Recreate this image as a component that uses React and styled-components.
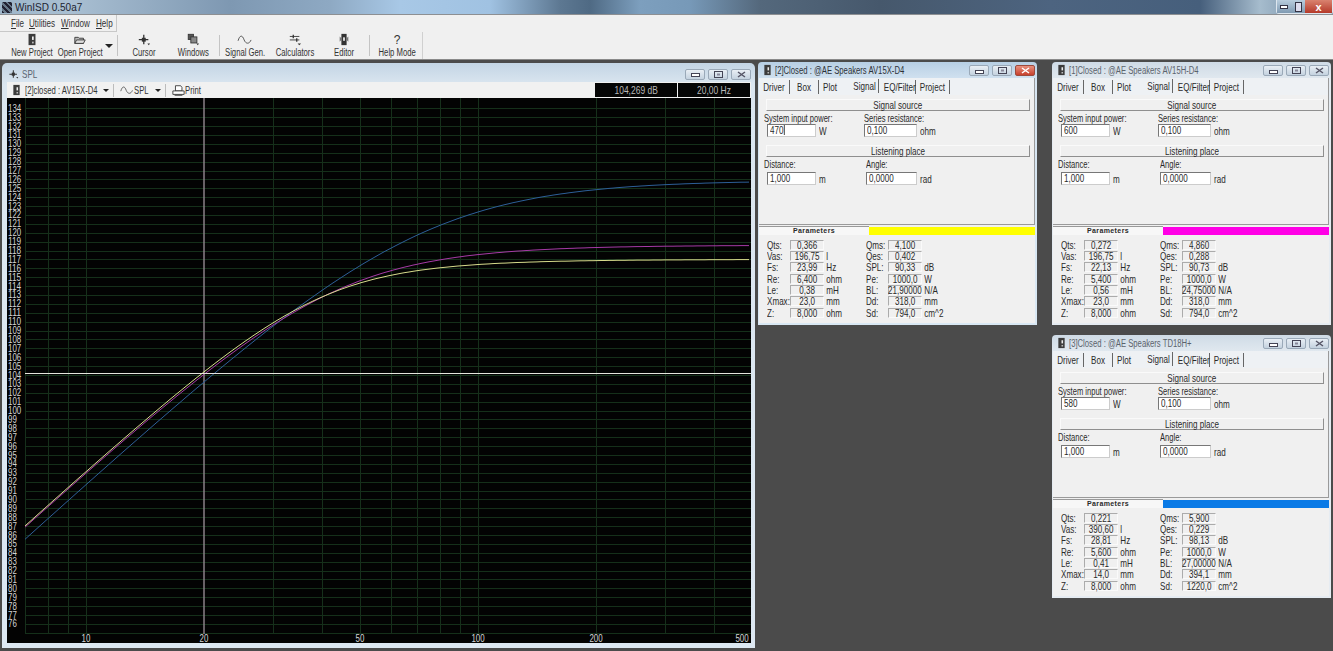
import React from "react";
import styled, { createGlobalStyle, css } from "styled-components";

const GlobalStyle = createGlobalStyle`
  html, body {
    margin: 0;
    padding: 0;
    height: 100%;
    overflow: hidden;
    background: #4b4b4b;
  }
  body {
    font-family: "Liberation Sans", Arial, sans-serif;
    font-size: 10px;
    color: #2a2a2a;
  }
`;

// the app's font is much narrower than anything installed
const squeeze = css`
  transform: scaleX(0.77);
  transform-origin: left center;
  white-space: nowrap;
`;

const Sq = styled.span`
  display: inline-block;
  white-space: nowrap;
  transform: scaleX(0.77);
  transform-origin: ${(p) => (p.$left ? "left" : "center")} center;
`;

const toolGroups = [
  {
    pad: 5,
    tools: [
      { label: "New Project", icon: "door", width: 48 },
      { label: "Open Project", icon: "folder", width: 48 },
      { arrow: true },
    ],
  },
  {
    pad: 2,
    tools: [
      { label: "Cursor", icon: "cursor", width: 48 },
      { label: "Windows", icon: "windows", width: 50 },
    ],
  },
  {
    pad: 0,
    tools: [
      { label: "Signal Gen.", icon: "wave", width: 50 },
      { label: "Calculators", icon: "sliders", width: 50 },
      { label: "Editor", icon: "editor", width: 48 },
    ],
  },
  { pad: 2, tools: [{ label: "Help Mode", icon: "help", width: 50 }] },
];

const menus = [
  { key: "F", rest: "ile", width: 18 },
  { key: "U", rest: "tilities", width: 32 },
  { key: "W", rest: "indow", width: 35 },
  { key: "H", rest: "elp", width: 18 },
];

const tabs = [
  { label: "Driver", width: 31 },
  { label: "Box", width: 29 },
  { label: "Plot", width: 31, plain: true },
  { label: "Signal", width: 29, active: true },
  { label: "EQ/Filter", width: 37 },
  { label: "Project", width: 34 },
];

const speakers = [
  {
    id: 2,
    x: 758,
    y: 2,
    title: "[2]Closed : @AE Speakers AV15X-D4",
    power: "470",
    color: "#ffff00",
    focused: true,
    params: [
      ["Qts:", "0,366", "", "Qms:", "4,100", ""],
      ["Vas:", "196,75", "l", "Qes:", "0,402", ""],
      ["Fs:", "23,99", "Hz", "SPL:", "90,33", "dB"],
      ["Re:", "6,400", "ohm", "Pe:", "1000,0", "W"],
      ["Le:", "0,38", "mH", "BL:", "21,90000", "N/A"],
      ["Xmax:", "23,0", "mm", "Dd:", "318,0", "mm"],
      ["Z:", "8,000", "ohm", "Sd:", "794,0", "cm^2"],
    ],
  },
  {
    id: 1,
    x: 1052,
    y: 2,
    title: "[1]Closed : @AE Speakers AV15H-D4",
    power: "600",
    color: "#ff00e6",
    params: [
      ["Qts:", "0,272", "", "Qms:", "4,860", ""],
      ["Vas:", "196,75", "l", "Qes:", "0,288", ""],
      ["Fs:", "22,13", "Hz", "SPL:", "90,73", "dB"],
      ["Re:", "5,400", "ohm", "Pe:", "1000,0", "W"],
      ["Le:", "0,56", "mH", "BL:", "24,75000", "N/A"],
      ["Xmax:", "23,0", "mm", "Dd:", "318,0", "mm"],
      ["Z:", "8,000", "ohm", "Sd:", "794,0", "cm^2"],
    ],
  },
  {
    id: 3,
    x: 1052,
    y: 275,
    title: "[3]Closed : @AE Speakers TD18H+",
    power: "580",
    color: "#0a7ae6",
    params: [
      ["Qts:", "0,221", "", "Qms:", "5,900", ""],
      ["Vas:", "390,60", "l", "Qes:", "0,229", ""],
      ["Fs:", "28,81", "Hz", "SPL:", "98,13", "dB"],
      ["Re:", "5,600", "ohm", "Pe:", "1000,0", "W"],
      ["Le:", "0,41", "mH", "BL:", "27,00000", "N/A"],
      ["Xmax:", "14,0", "mm", "Dd:", "394,1", "mm"],
      ["Z:", "8,000", "ohm", "Sd:", "1220,0", "cm^2"],
    ],
  },
];

// chart scale, in page pixels
const freqX = (f) => 86 + 392 * Math.log10(f / 10);
const splY = (db) => 108.3 + (134 - db) * 8.89;
const lineY = (db) => Math.round(splY(db)) + 0.5;

const gridFreqs = [7, 8, 9, 10, 30, 40, 50, 60, 70, 80, 90, 100, 200, 300, 400];
const levels = Array.from({ length: 59 }, (_, i) => 134 - i);
const freqLabels = [
  { text: "10", x: 86 },
  { text: "20", x: 204 },
  { text: "50", x: 360 },
  { text: "100", x: 478 },
  { text: "200", x: 596 },
  { text: "500", x: 742 },
];

const curves = [
  { color: "#2d5f98", peak: 125.88, fc: 71, q: 0.5 },
  { color: "#a63aa6", peak: 118.6, fc: 43, q: 0.55 },
  { color: "#d8dc8c", peak: 117, fc: 39, q: 0.6 },
];

// closed box is a second order high-pass
function curvePath({ peak, fc, q }) {
  const pts = [];
  for (let px = 25; px <= 751; px += 4) {
    const x = (10 * Math.pow(10, (px - 86) / 392)) / fc;
    const gain = x ** 4 / (x ** 4 + (1 / (q * q) - 2) * x * x + 1);
    pts.push(`${px},${splY(peak + 10 * Math.log10(gain)).toFixed(1)}`);
  }
  return pts.join(" ");
}

function ToolIcon({ name }) {
  if (name === "door") {
    return (
      <svg width="14" height="15" viewBox="0 0 14 15">
        <rect x="3" y="1" width="8" height="13" fill="#3c3c3c" />
        <rect x="7" y="4" width="2" height="4" fill="#eee" />
        <rect x="7" y="10" width="2" height="2" fill="#bbb" />
      </svg>
    );
  }
  if (name === "folder") {
    return (
      <svg width="16" height="15" viewBox="0 0 16 15" fill="none" stroke="#333">
        <path d="M2 5h4l1 1h5v6H2z" fill="#bbb" />
        <path d="M4 8h10l-2 4H2z" fill="#ddd" />
      </svg>
    );
  }
  if (name === "cursor") {
    return (
      <svg width="16" height="15" viewBox="0 0 16 15" fill="#333">
        <path d="M7 2h1.5v11H7zM2 7h11v1.5H2z" />
        <path d="M5.5 5.5h4.5v4.5H5.5z" />
        <path d="M12 12h3l-1.5 2z" />
      </svg>
    );
  }
  if (name === "windows") {
    return (
      <svg width="16" height="15" viewBox="0 0 16 15" stroke="#333">
        <rect x="2.5" y="1.5" width="6" height="6" fill="#555" />
        <rect x="5.5" y="4.5" width="7" height="7" fill="#888" />
        <path d="M12 12h3l-1.5 2z" fill="#333" stroke="none" />
      </svg>
    );
  }
  if (name === "wave") {
    return (
      <svg width="18" height="15" viewBox="0 0 18 15" fill="none" stroke="#444">
        <path d="M1 9 C3 2 6 2 8 8 C10 13 14 13 16 8" />
      </svg>
    );
  }
  if (name === "sliders") {
    return (
      <svg width="16" height="15" viewBox="0 0 16 15" stroke="#333">
        <path d="M2 4h11M2 8h11" />
        <path d="M6 2v4M10 6v4" strokeWidth="1.5" />
        <path d="M11 12h4l-2 2z" fill="#333" stroke="none" />
      </svg>
    );
  }
  if (name === "editor") {
    return (
      <svg width="14" height="15" viewBox="0 0 14 15">
        <rect x="4" y="1" width="6" height="13" fill="#333" />
        <path d="M2 4l3 3-3 3zM12 4L9 7l3 3z" fill="#777" />
        <rect x="6" y="5" width="2" height="4" fill="#eee" />
      </svg>
    );
  }
  return <HelpGlyph>?</HelpGlyph>;
}

function WindowButtons({ focused }) {
  return (
    <ButtonGroup>
      <CaptionButton>
        <svg width="9" height="6" viewBox="0 0 9 6">
          <rect x="0.5" y="2.5" width="8" height="3" fill="#fff" stroke="#445" />
        </svg>
      </CaptionButton>
      <CaptionButton>
        <svg width="9" height="7" viewBox="0 0 9 7">
          <rect x="0.5" y="0.5" width="8" height="6" fill="none" stroke="#445" />
          <rect x="3" y="2.5" width="3" height="2" fill="#889" />
        </svg>
      </CaptionButton>
      <CaptionButton $close={focused}>
        <svg width="9" height="7" viewBox="0 0 9 7" fill="none" stroke={focused ? "#fff" : "#556"} strokeWidth="1.5">
          <path d="M1 1l7 5M8 1L1 6" />
        </svg>
      </CaptionButton>
    </ButtonGroup>
  );
}

function Field({ label, value, unit, width, shift, caret, inset, low }) {
  return (
    <FieldBox $shift={shift}>
      <FieldLabel>{label}</FieldLabel>
      <FieldRow $inset={inset} $low={low}>
        <TextBox $width={width}>
          <Sq $left>
            {value}
            {caret && <Caret />}
          </Sq>
        </TextBox>
        <Unit>{unit}</Unit>
      </FieldRow>
    </FieldBox>
  );
}

function SpeakerWindow({ speaker }) {
  return (
    <Frame $x={speaker.x} $y={speaker.y} $focused={speaker.focused}>
      <Caption>
        <ToolSmall>
          <ToolIcon name="door" />
        </ToolSmall>
        <CaptionText $focused={speaker.focused}>{speaker.title}</CaptionText>
        <WindowButtons focused={speaker.focused} />
      </Caption>
      <Client>
        <TabPane>
          <TabRow>
            {tabs.map((tab) => (
              <Tab key={tab.label} $width={tab.width} $active={tab.active} $plain={tab.plain}>
                <Sq>{tab.label}</Sq>
              </Tab>
            ))}
          </TabRow>
          <SectionBar><Sq>Signal source</Sq></SectionBar>
          <FieldGrid>
            <Field label="System input power:" value={speaker.power} unit="W" width={49} caret={speaker.focused} inset />
            <Field label="Series resistance:" value="0,100" unit="ohm" width={53} />
          </FieldGrid>
          <SectionBar><Sq>Listening place</Sq></SectionBar>
          <FieldGrid>
            <Field label="Distance:" value="1,000" unit="m" width={49} inset low />
            <Field label="Angle:" value="0,0000" unit="rad" width={51} shift low />
          </FieldGrid>
        </TabPane>
        <ParamHeader>
          <ParamTab>Parameters</ParamTab>
          <ColorBar $color={speaker.color} />
        </ParamHeader>
        <ParamGrid>
          {speaker.params.map((row) => (
            <React.Fragment key={row[0]}>
              <ParamLabel>{row[0]}</ParamLabel>
              <ParamValue><Sq>{row[1]}</Sq></ParamValue>
              <ParamUnit>{row[2]}</ParamUnit>
              <ParamLabel>{row[3]}</ParamLabel>
              <ParamValue><Sq>{row[4]}</Sq></ParamValue>
              <ParamUnit>{row[5]}</ParamUnit>
            </React.Fragment>
          ))}
        </ParamGrid>
      </Client>
    </Frame>
  );
}

function SplChart() {
  return (
    <ChartSvg viewBox="7 98 744 545" width="744" height="545">
      <rect x="7" y="98" width="744" height="545" fill="#030303" />
      {levels.map((db) => (
        <line key={db} x1="25" x2="751" y1={lineY(db)} y2={lineY(db)} stroke="#15301a" />
      ))}
      <line x1="25" x2="751" y1="633.5" y2="633.5" stroke="#15301a" />
      {gridFreqs.map((f) => (
        <line
          key={f}
          x1={Math.round(freqX(f)) + 0.5}
          x2={Math.round(freqX(f)) + 0.5}
          y1="98"
          y2="634"
          stroke="#162f1b"
        />
      ))}
      <line x1="204" x2="204" y1="98" y2="634" stroke="#8b8088" strokeWidth="1.5" />
      {curves.map((curve) => (
        <polyline key={curve.color} points={curvePath(curve)} fill="none" stroke={curve.color} strokeWidth="1" />
      ))}
      <line x1="25" x2="751" y1="373.5" y2="373.5" stroke="#e4e4dc" />
      {levels.map((db) => (
        <AxisText key={db} x="8" y={splY(db) + 3.5} textLength={String(db).length * 4.4} lengthAdjust="spacingAndGlyphs">
          {db}
        </AxisText>
      ))}
      {freqLabels.map((label) => (
        <AxisText
          key={label.text}
          x={label.x - label.text.length * 2.2}
          y="642"
          textLength={label.text.length * 4.4}
          lengthAdjust="spacingAndGlyphs"
        >
          {label.text}
        </AxisText>
      ))}
    </ChartSvg>
  );
}

function App() {
  return (
    <>
      <GlobalStyle />
      <Page>
        <TitleBar>
          <AppIcon />
          <AppTitle>WinISD 0.50a7</AppTitle>
          <AppButtons>
            <AppButton>
              <svg width="8" height="5" viewBox="0 0 8 5"><rect x="0.5" y="1.5" width="7" height="3" fill="#fff" stroke="#334" /></svg>
            </AppButton>
            <AppButton>
              <svg width="7" height="10" viewBox="0 0 7 10"><rect x="0.5" y="0.5" width="6" height="9" fill="#dde" stroke="#334" /></svg>
            </AppButton>
            <AppButton $close>x</AppButton>
          </AppButtons>
        </TitleBar>
        <MenuBar>
          <MenuBand>
            {menus.map((menu) => (
              <MenuItem key={menu.key} $width={menu.width}>
                <u>{menu.key}</u>
                {menu.rest}
              </MenuItem>
            ))}
          </MenuBand>
        </MenuBar>
        <ToolBar>
          <ToolBand>
            {toolGroups.map((group, i) => (
              <ToolGroup key={i} $pad={group.pad}>
                {group.tools.map((tool) =>
                  tool.arrow ? (
                    <DropArrow key="arrow" />
                  ) : (
                    <ToolButton key={tool.label} $width={tool.width}>
                      <ToolIcon name={tool.icon} />
                      <Sq>{tool.label}</Sq>
                    </ToolButton>
                  )
                )}
              </ToolGroup>
            ))}
          </ToolBand>
        </ToolBar>
        <Desktop>
          <SplWindow>
            <SplCaption>
              <ToolSmall>
                <ToolIcon name="cursor" />
              </ToolSmall>
              <SplTitle>SPL</SplTitle>
              <WindowButtons />
            </SplCaption>
            <SplToolbar>
              <ToolSmall>
                <ToolIcon name="door" />
              </ToolSmall>
              <ComboText $width={72} $gap={2}>[2]closed : AV15X-D4</ComboText>
              <SmallArrow $gap={6} />
              <BarSep />
              <ToolSmall $wide>
                <ToolIcon name="wave" />
              </ToolSmall>
              <ComboText $width={14}>SPL</ComboText>
              <SmallArrow $gap={7} />
              <BarSep />
              <svg width="13" height="13" viewBox="0 0 15 14" fill="#fff" stroke="#333">
                <path d="M4 1.5h6l1.5 2v4h-7.5z" />
                <path d="M1 7.5h13v4H1z" />
                <path d="M3 12.5h9" />
              </svg>
              <ComboText $width={18}>Print</ComboText>
              <Readouts>
                <Readout $width={82}><Sq>104,269 dB</Sq></Readout>
                <Readout $width={72}><Sq>20,00 Hz</Sq></Readout>
              </Readouts>
            </SplToolbar>
            <SplChart />
          </SplWindow>
          {speakers.map((speaker) => (
            <SpeakerWindow key={speaker.id} speaker={speaker} />
          ))}
        </Desktop>
      </Page>
    </>
  );
}

const Page = styled.div`
  width: 1333px;
  height: 651px;
  display: flex;
  flex-direction: column;
  overflow: hidden;
`;

const TitleBar = styled.div`
  height: 14px;
  flex: none;
  display: flex;
  align-items: center;
  padding-left: 2px;
  border-bottom: 1px solid #8d8f92;
  background: linear-gradient(
    90deg,
    #9db5c9 0,
    #a9bfd2 70px,
    #7e98b2 230px,
    #8ea9c3 330px,
    #a8c8e6 400px,
    #a0c2e2 490px,
    #5d7892 560px,
    #4f6a84 590px,
    #7d9fbe 640px,
    #7799b8 690px,
    #54687c 760px,
    #46586c 880px,
    #4d6480 1050px,
    #465f7c 1200px,
    #a6bccd 1260px,
    #8ba3b8 1288px
  );
`;

const AppIcon = styled.div`
  width: 10px;
  height: 11px;
  background: repeating-linear-gradient(45deg, #223 0 2px, #678 2px 4px);
`;

const AppTitle = styled.span`
  margin-left: 3px;
  font-size: 10px;
  color: #1c2430;
`;

const AppButtons = styled.div`
  margin-left: auto;
  display: flex;
  height: 13px;
  align-self: flex-start;
  border: 1px solid #dde6ee;
  border-top: none;
  border-radius: 0 0 3px 3px;
`;

const AppButton = styled.div`
  width: ${(p) => (p.$close ? "23px" : "10px")};
  padding: 0 2px;
  display: flex;
  align-items: center;
  justify-content: center;
  color: #fff;
  font-weight: bold;
  font-size: 11px;
  background: ${(p) => (p.$close ? "linear-gradient(#d9826f, #b53a2a)" : "linear-gradient(#b9cddd, #7f9ab2)")};
`;

const MenuBar = styled.div`
  height: 17px;
  flex: none;
  background: #f0f0f0;
  display: flex;
`;

const MenuBand = styled.div`
  width: 105px;
  padding-left: 11px;
  display: flex;
  align-items: center;
  border-right: 1px solid #c8c8c8;
  border-bottom: 1px solid #c8c8c8;
`;

const MenuItem = styled.span`
  ${squeeze}
  width: ${(p) => p.$width}px;
  flex: none;
  font-size: 10.5px;
  color: #333;
`;

const ToolBar = styled.div`
  height: 27px;
  flex: none;
  background: #f0f0f0;
  display: flex;
  border-bottom: 1px solid #8a8a8a;
`;

const ToolBand = styled.div`
  width: 419px;
  padding-left: 3px;
  display: flex;
  border-right: 1px solid #d0d0d0;
`;

const ToolGroup = styled.div`
  display: flex;
  align-items: stretch;
  padding-left: ${(p) => p.$pad}px;
  &:not(:last-child)::after {
    content: "";
    width: 1px;
    margin: 3px 0 3px 1px;
    background: #c4c4c4;
  }
`;

const ToolButton = styled.div`
  width: ${(p) => p.$width}px;
  display: flex;
  flex-direction: column;
  align-items: center;
  padding-top: 1px;
  font-size: 10px;
  line-height: 11px;
  color: #333;
  svg {
    height: 13px;
    margin-bottom: 1px;
  }
`;

const HelpGlyph = styled.span`
  height: 14px;
  font-size: 12px;
  line-height: 14px;
`;

const DropArrow = styled.div`
  width: 0;
  height: 0;
  margin: 12px 3px 0 1px;
  border-left: 4px solid transparent;
  border-right: 4px solid transparent;
  border-top: 4px solid #222;
`;

const Desktop = styled.div`
  position: relative;
  flex: 1;
  background: #4b4b4b;
`;

const SplWindow = styled.div`
  position: absolute;
  left: 2px;
  top: 3px;
  width: 753px;
  height: 585px;
  box-sizing: border-box;
  padding: 0 4px 4px 5px;
  border-radius: 5px 5px 0 0;
  background: linear-gradient(#c3d5e5 0, #dbe6f0 22px, #dde8f2 100%);
`;

const SplCaption = styled.div`
  height: 19px;
  box-sizing: border-box;
  padding-top: 2px;
  display: flex;
  align-items: center;
`;

const SplTitle = styled.span`
  ${squeeze}
  margin-left: 2px;
  font-size: 10.5px;
  color: #5b6470;
`;

const ToolSmall = styled.span`
  display: flex;
  flex: none;
  width: ${(p) => (p.$wide ? "14px" : "13px")};
  justify-content: center;
  svg {
    width: ${(p) => (p.$wide ? "14px" : "11px")};
    height: 12px;
  }
`;

const SplToolbar = styled.div`
  height: 16px;
  display: flex;
  align-items: center;
  padding-left: 3px;
  background: #f1f1f1;
`;

const ComboText = styled.span`
  ${squeeze}
  width: ${(p) => p.$width}px;
  flex: none;
  margin-left: ${(p) => p.$gap || 0}px;
  font-size: 10px;
  color: #333;
`;

const SmallArrow = styled.span`
  margin-left: ${(p) => p.$gap}px;
  border-left: 3px solid transparent;
  border-right: 3px solid transparent;
  border-top: 3px solid #222;
`;

const BarSep = styled.span`
  width: 1px;
  height: 13px;
  margin: 0 6px 0 4px;
  background: #bcbcbc;
`;

const Readouts = styled.div`
  margin-left: auto;
  display: flex;
  gap: 1px;
  height: 14px;
  padding-right: 1px;
`;

const Readout = styled.div`
  width: ${(p) => p.$width}px;
  background: #050505;
  color: #b8b8b8;
  font-size: 11px;
  line-height: 14px;
  text-align: center;
`;

const ChartSvg = styled.svg`
  display: block;
`;

const AxisText = styled.text`
  fill: #d4d4d4;
  font-size: 10px;
`;

const Frame = styled.div`
  position: absolute;
  left: ${(p) => p.$x}px;
  top: ${(p) => p.$y}px;
  width: 279px;
  height: 263px;
  box-sizing: border-box;
  padding: 0 2px 2px 1px;
  border-radius: 4px 4px 0 0;
  background: ${(p) =>
    p.$focused
      ? "linear-gradient(#b7cfe4 0, #d6e5f2 20px, #d9e8f4 100%)"
      : "linear-gradient(#cfdbe6 0, #e4ebf1 20px, #e6ecf2 100%)"};
`;

const Caption = styled.div`
  height: 16px;
  display: flex;
  align-items: center;
  padding-left: 2px;
`;

const CaptionText = styled.span`
  ${squeeze}
  font-size: 10px;
  margin-left: 1px;
  color: ${(p) => (p.$focused ? "#2d3138" : "#5b636c")};
`;

const ButtonGroup = styled.div`
  margin-left: auto;
  margin-top: 1px;
  display: flex;
  gap: 3px;
`;

const CaptionButton = styled.div`
  width: 20px;
  height: 11px;
  box-sizing: border-box;
  display: flex;
  align-items: center;
  justify-content: center;
  border: 1px solid ${(p) => (p.$close ? "#9c4a3c" : "#9aa9b8")};
  border-radius: 2px;
  background: ${(p) =>
    p.$close ? "linear-gradient(#e8907e, #c8402c)" : "linear-gradient(#e9eff5, #c4d2df)"};
`;

const Client = styled.div`
  height: 245px;
  background: #f0f0f0;
`;

const TabPane = styled.div`
  height: 147px;
  box-sizing: border-box;
  border-right: 1px solid #9a9a9a;
  border-bottom: 1px solid #9a9a9a;
  background: #f0f0f0;
`;

const TabRow = styled.div`
  display: flex;
  height: 17px;
  background: #eef1f4;
  margin-bottom: 4px;
`;

const Tab = styled.div`
  width: ${(p) => p.$width}px;
  box-sizing: border-box;
  text-align: center;
  font-size: 10.5px;
  line-height: 14px;
  color: #2a2a2a;
  border-right: ${(p) => (p.$plain ? "none" : "1px solid #666")};
  margin: ${(p) => (p.$active ? "1px 0 2px" : "2px 0 1px")};
  padding-right: ${(p) => (p.$plain ? "8px" : "0")};
`;

const SectionBar = styled.div`
  height: 12px;
  margin: 0 4px 0 7px;
  box-sizing: border-box;
  text-align: center;
  line-height: 10px;
  font-size: 10.5px;
  background: #f0f0f0;
  border: 1px solid;
  border-color: #fafafa #8f8f8f #8f8f8f #fafafa;
`;

const FieldGrid = styled.div`
  display: grid;
  grid-template-columns: 100px 1fr;
  height: 34px;
  padding-left: 5px;
`;

const FieldBox = styled.div`
  padding-top: 1px;
  margin-left: ${(p) => (p.$shift ? "2px" : "0")};
`;

const FieldLabel = styled.div`
  ${squeeze}
  height: 12px;
  line-height: 12px;
  font-size: 10.5px;
  transform: scaleX(0.72);
`;

const FieldRow = styled.div`
  display: flex;
  align-items: flex-end;
  gap: 3px;
  margin-top: ${(p) => (p.$low ? "2px" : "0")};
  margin-left: ${(p) => (p.$inset ? "3px" : "0")};
`;

const TextBox = styled.div`
  width: ${(p) => p.$width}px;
  height: 13px;
  box-sizing: border-box;
  padding-left: 2px;
  font-size: 10.5px;
  line-height: 11px;
  background: #fff;
  border: 1px solid #777;
  border-right-color: #ccc;
  border-bottom-color: #ccc;
`;

const Caret = styled.span`
  display: inline-block;
  width: 1px;
  height: 10px;
  vertical-align: -1px;
  background: #111;
`;

const Unit = styled.span`
  ${squeeze}
  font-size: 10.5px;
  line-height: 12px;
`;

const ParamHeader = styled.div`
  display: flex;
  height: 8px;
  margin-top: 2px;
`;

const ParamTab = styled.div`
  width: 110px;
  text-align: center;
  font-size: 7px;
  font-weight: bold;
  line-height: 8px;
  letter-spacing: 0.4px;
  background: #f7f7f7;
  border-top: 1px solid #999;
  margin-top: -1px;
`;

const ColorBar = styled.div`
  flex: 1;
  background: ${(p) => p.$color};
`;

const ParamGrid = styled.div`
  display: grid;
  grid-template-columns: 23px 34px 42px 22px 34px 1fr;
  grid-auto-rows: 11.33px;
  padding: 4px 0 0 8px;
  align-items: center;
`;

const ParamLabel = styled.span`
  ${squeeze}
  font-size: 10.5px;
`;

const ParamValue = styled.span`
  height: 10px;
  display: flex;
  justify-content: center;
  line-height: 9px;
  font-size: 10.5px;
  box-sizing: border-box;
  border: 1px solid;
  border-color: #ababab #fafafa #fafafa #ababab;
`;

const ParamUnit = styled.span`
  ${squeeze}
  padding-left: 3px;
  font-size: 10.5px;
`;

export default App;
